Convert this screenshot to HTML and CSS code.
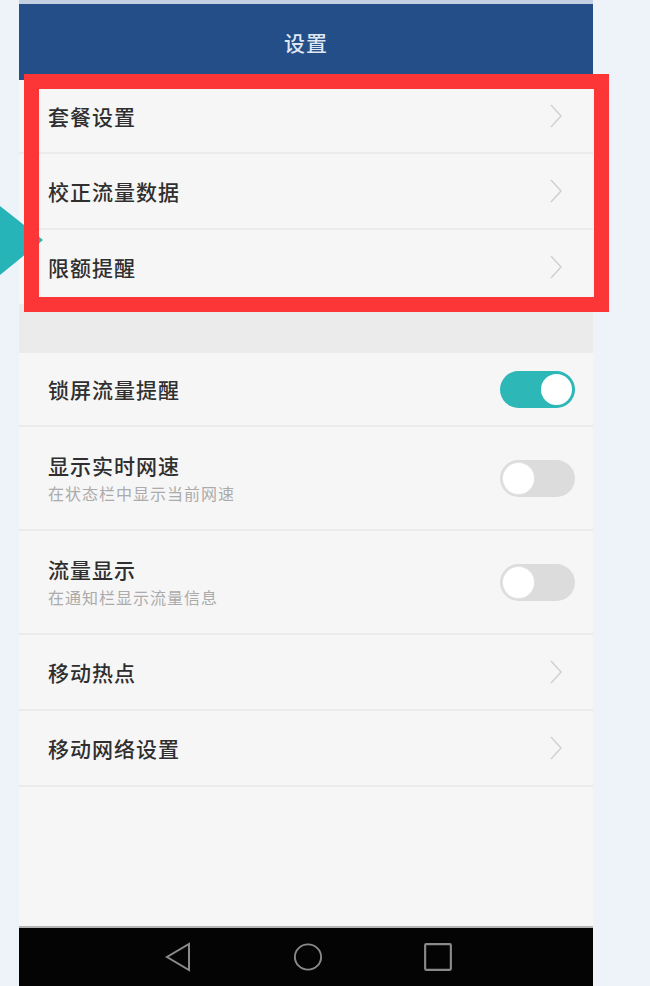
FILE: index.html
```html
<!DOCTYPE html>
<html lang="zh-CN">
<head>
    <meta charset="UTF-8">
    <title>设置</title>
    <link rel="stylesheet" href="styles.css">
</head>
<body>
    <div class="phone">
        <div class="status-strip"></div>
        <header class="title-bar"><h1>设置</h1></header>

        <div class="group">
            <div class="row row-first"><span class="label">套餐设置</span><svg class="chevron" viewBox="0 0 12 24"><polyline points="1,1 11,12 1,23"/></svg></div>
            <div class="row"><span class="label">校正流量数据</span><svg class="chevron" viewBox="0 0 12 24"><polyline points="1,1 11,12 1,23"/></svg></div>
            <div class="row"><span class="label">限额提醒</span><svg class="chevron" viewBox="0 0 12 24"><polyline points="1,1 11,12 1,23"/></svg></div>
        </div>

        <div class="spacer"></div>

        <div class="group">
            <div class="row row-short"><span class="label">锁屏流量提醒</span><span class="switch on"><span class="knob"></span></span></div>
            <div class="row row-tall">
                <div class="text"><span class="label">显示实时网速</span><span class="sub">在状态栏中显示当前网速</span></div>
                <span class="switch"><span class="knob"></span></span>
            </div>
            <div class="row row-tall">
                <div class="text"><span class="label">流量显示</span><span class="sub">在通知栏显示流量信息</span></div>
                <span class="switch"><span class="knob"></span></span>
            </div>
            <div class="row"><span class="label">移动热点</span><svg class="chevron" viewBox="0 0 12 24"><polyline points="1,1 11,12 1,23"/></svg></div>
            <div class="row"><span class="label">移动网络设置</span><svg class="chevron" viewBox="0 0 12 24"><polyline points="1,1 11,12 1,23"/></svg></div>
        </div>

        <div class="filler"></div>

        <nav class="nav-bar">
            <svg viewBox="0 0 28 30"><polygon points="25,2 25,28 3,15"/></svg>
            <svg viewBox="0 0 32 30"><ellipse cx="16" cy="15" rx="14" ry="13.5"/></svg>
            <svg viewBox="0 0 28 28"><rect x="2" y="2" width="24" height="24" rx="1"/></svg>
        </nav>
    </div>

    <!-- annotation drawn over the screenshot -->
    <svg class="pointer" viewBox="0 0 44 70"><polygon points="0,0 43,34 0,69"/></svg>
    <div class="highlight"></div>
</body>
</html>
```

FILE: styles.css
```css
body, html { margin: 0; padding: 0; background-color: #eef3fa; font-family: "Noto Sans CJK SC", "Noto Sans", sans-serif; }
body { position: relative; height: 986px; overflow: hidden; }

.phone { width: 574px; margin-left: 19px; height: 986px; display: flex; flex-direction: column; background-color: #f7f6f6; }
.status-strip { height: 4px; background-color: #c3d1e3; }
.title-bar { height: 76px; background-color: #234e88; display: flex; align-items: center; justify-content: center; }
.title-bar h1 { margin: 0; font-size: 21px; font-weight: 500; color: #dfe6f1; letter-spacing: 1px; }

.group { background-color: #f7f6f6; }
.row { height: 76px; box-sizing: border-box; border-bottom: 2px solid #ebebeb; display: flex; align-items: center; justify-content: space-between; padding: 0 31px 0 29px; }
.row-first { height: 74px; }
.row-short { height: 74px; }
.row-tall { height: 104px; }
.label { font-size: 21px; font-weight: 500; color: #2f2f2f; letter-spacing: 1px; line-height: 28px; }
.text { display: flex; flex-direction: column; }
.sub { font-size: 16px; color: #ababab; line-height: 24px; margin-top: 2px; letter-spacing: 1px; }

.chevron { width: 12px; height: 24px; fill: none; stroke: #cfcfcf; stroke-width: 1.4; }

.switch { width: 75px; height: 37px; border-radius: 19px; background-color: #dcdcdc; position: relative; margin-right: -13px; box-sizing: border-box; }
.switch .knob { position: absolute; top: 3px; left: 3px; width: 31px; height: 31px; border-radius: 50%; background-color: #ffffff; box-shadow: 0 0 0 1px #e3e3e3; }
.switch.on { background-color: #2db7b6; }
.switch.on .knob { left: auto; right: 3px; box-shadow: none; }

.spacer { height: 47px; background-color: #ebebeb; }
.filler { flex: 1; }

.nav-bar { height: 58px; background-color: #050404; border-top: 2px solid #b4b4b4; display: flex; align-items: center; justify-content: center; gap: 100px; padding-left: 4px; }
.nav-bar svg { width: 30px; height: 30px; fill: none; stroke: #8a8a8a; stroke-width: 2; }

.pointer { position: absolute; left: 0; top: 206px; width: 44px; height: 70px; fill: #27b4b9; }
.highlight { position: absolute; left: 24px; top: 74px; width: 585px; height: 238px; box-sizing: border-box; border: 15px solid #fc3636; }
```
